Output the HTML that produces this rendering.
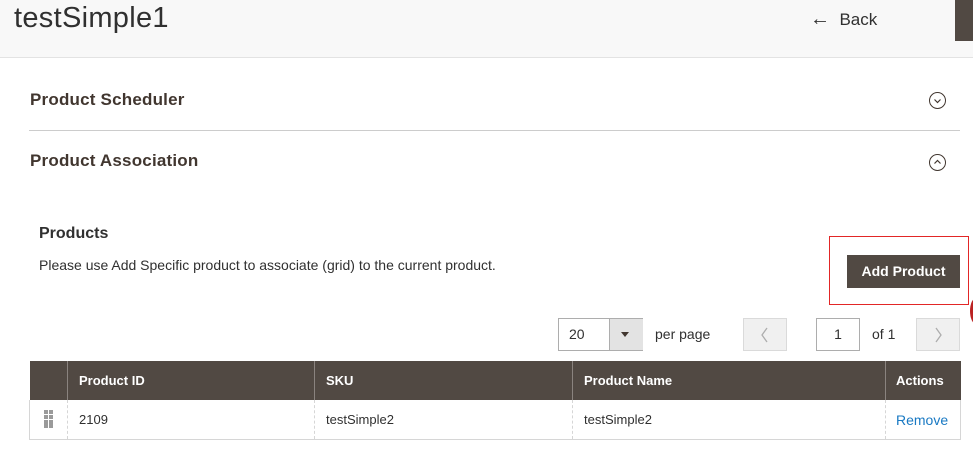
<!DOCTYPE html>
<html><head><style>
body{margin:0;width:973px;height:471px;overflow:hidden;background:#fff;font-family:"Liberation Sans",sans-serif;color:#303030;position:relative}
.a{position:absolute}
.hdr{left:0;top:0;width:973px;height:57px;background:#f8f8f8;border-bottom:1px solid #e3e3e3}
.sec{font-size:17px;font-weight:bold;color:#41362f;letter-spacing:0.2px}
.circ{width:15px;height:15px;border:1px solid #41362f;border-radius:50%}
.btn{background:#f0f0f0;border:1px solid #dadada;box-sizing:border-box}
table{border-collapse:collapse;font-size:13px;table-layout:fixed}
th{background:#514943;color:#fff;text-align:left;font-weight:bold;height:39px;padding:0 0 0 11px;border-left:1px solid #8a837f;box-sizing:border-box}
td{height:39px;padding:0 0 0 11px;border-left:1px dashed #d6d6d6;border-bottom:1px solid #d6d6d6;color:#303030;box-sizing:border-box}
</style></head><body>
<div class="a hdr"></div>
<div class="a" style="left:14px;top:2px;font-size:29px;color:#303030;letter-spacing:0.3px">testSimple1</div>
<div class="a" style="left:810px;top:8px;font-size:17px;color:#303030"><span style="font-size:20px">&#8592;</span>&nbsp; Back</div>
<div class="a" style="left:955px;top:0;width:18px;height:41px;background:#514943"></div>

<div class="a sec" style="left:30px;top:90px">Product Scheduler</div>
<div class="a circ" style="left:929px;top:92px"><svg width="15" height="15" class="a" style="left:0;top:0"><path d="M4.5 6.5 L7.5 9.5 L10.5 6.5" fill="none" stroke="#41362f" stroke-width="1.2"/></svg></div>
<div class="a" style="left:29px;top:130px;width:931px;height:1px;background:#ccc"></div>
<div class="a sec" style="left:30px;top:151px">Product Association</div>
<div class="a circ" style="left:929px;top:154px"><svg width="15" height="15" class="a" style="left:0;top:0"><path d="M4.5 8.5 L7.5 5.5 L10.5 8.5" fill="none" stroke="#41362f" stroke-width="1.2"/></svg></div>

<div class="a" style="left:39px;top:225px;font-size:16px;font-weight:bold;color:#303030">Products</div>
<div class="a" style="left:39px;top:257px;font-size:14px;color:#303030">Please use Add Specific product to associate (grid) to the current product.</div>
<div class="a" style="left:829px;top:236px;width:140px;height:69px;border:1px solid #e22626;box-sizing:border-box"></div>
<div class="a" style="left:847px;top:255px;width:113px;height:33px;background:#514943;color:#fff;font-size:14px;font-weight:bold;text-align:center;line-height:33px">Add Product</div>
<div class="a" style="left:970px;top:298px;width:12px;height:26px;border-radius:50%;background:#b22"></div>

<div class="a" style="left:558px;top:318px;width:85px;height:33px;border:1px solid #adadad;box-sizing:border-box;background:#fff"></div>
<div class="a" style="left:569px;top:326px;font-size:14px">20</div>
<div class="a" style="left:609px;top:319px;width:33px;height:31px;background:#e3e3e3;border-left:1px solid #adadad"></div>
<div class="a" style="left:621px;top:332px;width:0;height:0;border-left:4px solid transparent;border-right:4px solid transparent;border-top:5px solid #41362f"></div>
<div class="a" style="left:655px;top:326px;font-size:14px">per page</div>
<div class="a btn" style="left:743px;top:318px;width:44px;height:33px"><svg class="a" style="left:16px;top:8px" width="10" height="16"><path d="M7 1 L2 8 L7 15" fill="none" stroke="#adadad" stroke-width="1.3"/></svg></div>
<div class="a" style="left:816px;top:318px;width:44px;height:33px;border:1px solid #adadad;box-sizing:border-box;text-align:center;line-height:31px;font-size:14px">1</div>
<div class="a" style="left:872px;top:326px;font-size:14px">of 1</div>
<div class="a btn" style="left:916px;top:318px;width:44px;height:33px"><svg class="a" style="left:17px;top:8px" width="10" height="16"><path d="M2 1 L7 8 L2 15" fill="none" stroke="#adadad" stroke-width="1.3"/></svg></div>

<table class="a" style="left:29px;top:361px;width:931px">
<colgroup><col style="width:38px"><col style="width:247px"><col style="width:258px"><col style="width:313px"><col style="width:75px"></colgroup>
<tr><th style="border-left:none"></th><th>Product ID</th><th>SKU</th><th>Product Name</th><th style="padding-left:10px">Actions</th></tr>
<tr><td style="border-left:1px solid #d6d6d6;padding:0;text-align:center"><svg width="10" height="18" style="vertical-align:middle"><g fill="#9a9a9a"><rect x="0" y="0" width="4" height="4"/><rect x="5" y="0" width="4" height="4"/><rect x="0" y="5" width="4" height="4"/><rect x="5" y="5" width="4" height="4"/><rect x="0" y="10" width="4" height="4"/><rect x="5" y="10" width="4" height="4"/><rect x="0" y="14" width="4" height="4"/><rect x="5" y="14" width="4" height="4"/></g></svg></td><td>2109</td><td>testSimple2</td><td>testSimple2</td><td style="border-right:1px solid #d6d6d6;color:#1979c3;font-size:14px;padding-left:10px;padding-top:2px">Remove</td></tr>
</table>
</body></html>
